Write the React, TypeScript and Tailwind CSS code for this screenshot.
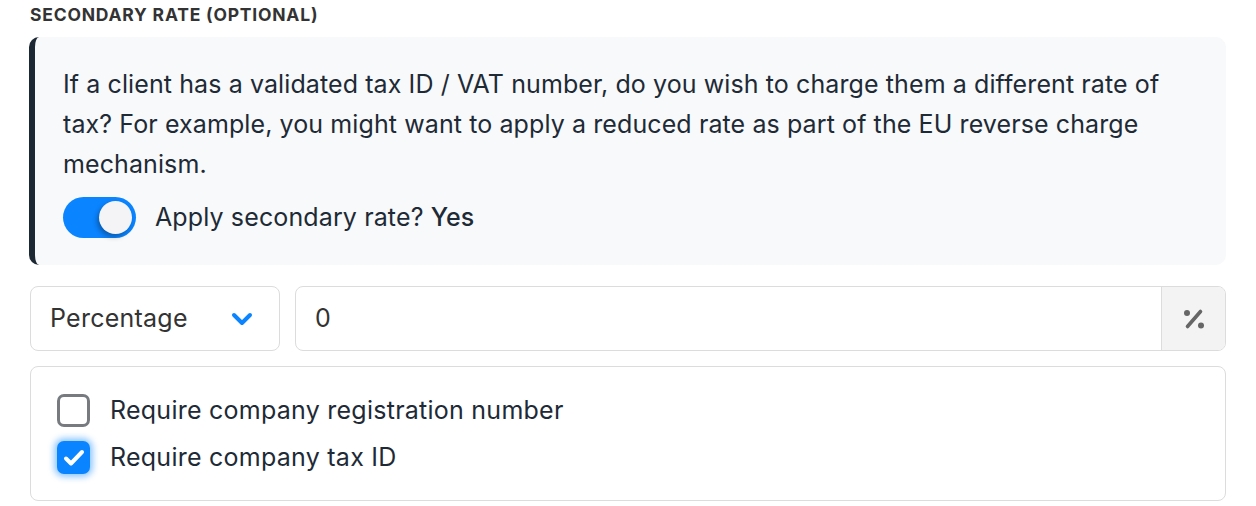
import React, { useState } from 'react';

const Toggle: React.FC<{ on: boolean; onChange: (v: boolean) => void }> = ({ on, onChange }) => (
  <button
    type="button"
    onClick={() => onChange(!on)}
    className={`relative h-[41px] w-[73px] shrink-0 rounded-full ${on ? 'bg-[#0a84ff]' : 'bg-[#d1d5db]'}`}
  >
    <span
      className={`absolute top-[4px] h-[33px] w-[33px] rounded-full bg-[#f4f4f6] shadow-[-2px_3px_5px_rgba(0,0,0,0.3)] ${on ? 'left-[36px]' : 'left-[4px]'}`}
    />
  </button>
);

const Checkbox: React.FC<{ checked: boolean; label: string; onChange: (v: boolean) => void }> = ({
  checked,
  label,
  onChange,
}) => (
  <label className="flex h-[33px] cursor-pointer items-center gap-[20px]">
    <span
      onClick={() => onChange(!checked)}
      className={`flex h-[33px] w-[33px] shrink-0 items-center justify-center rounded-[7px] ${
        checked
          ? 'bg-[#0a84ff] shadow-[0_0_6px_3px_rgba(10,132,255,0.45)]'
          : 'border-[3px] border-[#777b80] bg-white'
      }`}
    >
      {checked && (
        <svg width="26" height="26" viewBox="0 0 26 26" fill="none">
          <path d="M5 13.5l5 5L21 7" stroke="white" strokeWidth="4" strokeLinecap="round" strokeLinejoin="round" />
        </svg>
      )}
    </span>
    <span className="text-[25px] leading-[33px] tracking-[0.01em] text-[#1e2a36]">{label}</span>
  </label>
);

export default function App() {
  const [applyRate, setApplyRate] = useState(true);
  const [regNumber, setRegNumber] = useState(false);
  const [taxId, setTaxId] = useState(true);

  return (
    <div className="min-h-[506px] bg-white pl-[30px] pr-[30px] font-['Inter','Noto_Sans',sans-serif]">
      {/* Heading */}
      <div className="pt-[4px] text-[17.5px] font-bold uppercase leading-[22px] tracking-[0.045em] text-[#333]">
        Secondary rate (optional)
      </div>

      {/* Info box */}
      <div className="mt-[11px] -ml-px rounded-[10px] border-l-[6px] border-[#1c2833] bg-[#f7f9fa] pb-[27px] pl-[28px] pr-[28px] pt-[27px]">
        <p className="text-[25px] leading-[40px] tracking-[0.004em] text-[#1e2a36]">
          If a client has a validated tax ID / VAT number, do you wish to charge them a different rate of tax? For
          example, you might want to apply a reduced rate as part of the EU reverse charge mechanism.
        </p>
        <div className="mt-[13px] flex items-center gap-[19px]">
          <Toggle on={applyRate} onChange={setApplyRate} />
          <span className="text-[25px] tracking-[0.005em] text-[#1e2a36]">
            Apply secondary rate? <span className="font-medium">{applyRate ? 'Yes' : 'No'}</span>
          </span>
        </div>
      </div>

      {/* Rate row */}
      <div className="mt-[21px] flex gap-[15px]">
        <div className="flex h-[65px] w-[250px] shrink-0 items-center justify-between rounded-[8px] border border-[#dcdcdc] bg-white pl-[19px] pr-[26px]">
          <span className="text-[25px] tracking-[0.01em] text-[#333]">Percentage</span>
          <svg width="22" height="14" viewBox="0 0 22 14" fill="none">
            <path d="M3 3l8 8 8-8" stroke="#0a84ff" strokeWidth="4" strokeLinecap="round" strokeLinejoin="round" />
          </svg>
        </div>
        <div className="flex h-[65px] flex-1 overflow-hidden rounded-[8px] border border-[#dcdcdc] bg-white">
          <div className="flex flex-1 items-center pl-[19px] text-[25px] text-[#333]">0</div>
          <div className="flex w-[64px] items-center justify-center border-l border-[#dcdcdc] bg-[#f3f3f3]">
            <svg width="24" height="24" viewBox="0 0 24 24" fill="none">
              <path d="M18.5 4.5L5.5 19.5" stroke="#666" strokeWidth="3.6" strokeLinecap="round" />
              <circle cx="5" cy="6" r="3" fill="#666" />
              <circle cx="19" cy="18.5" r="3" fill="#666" />
            </svg>
          </div>
        </div>
      </div>

      {/* Requirements */}
      <div className="mt-[15px] flex flex-col gap-[14px] rounded-[8px] border border-[#dcdcdc] bg-white pb-[26px] pl-[26px] pt-[27px]">
        <Checkbox checked={regNumber} onChange={setRegNumber} label="Require company registration number" />
        <Checkbox checked={taxId} onChange={setTaxId} label="Require company tax ID" />
      </div>
    </div>
  );
}
